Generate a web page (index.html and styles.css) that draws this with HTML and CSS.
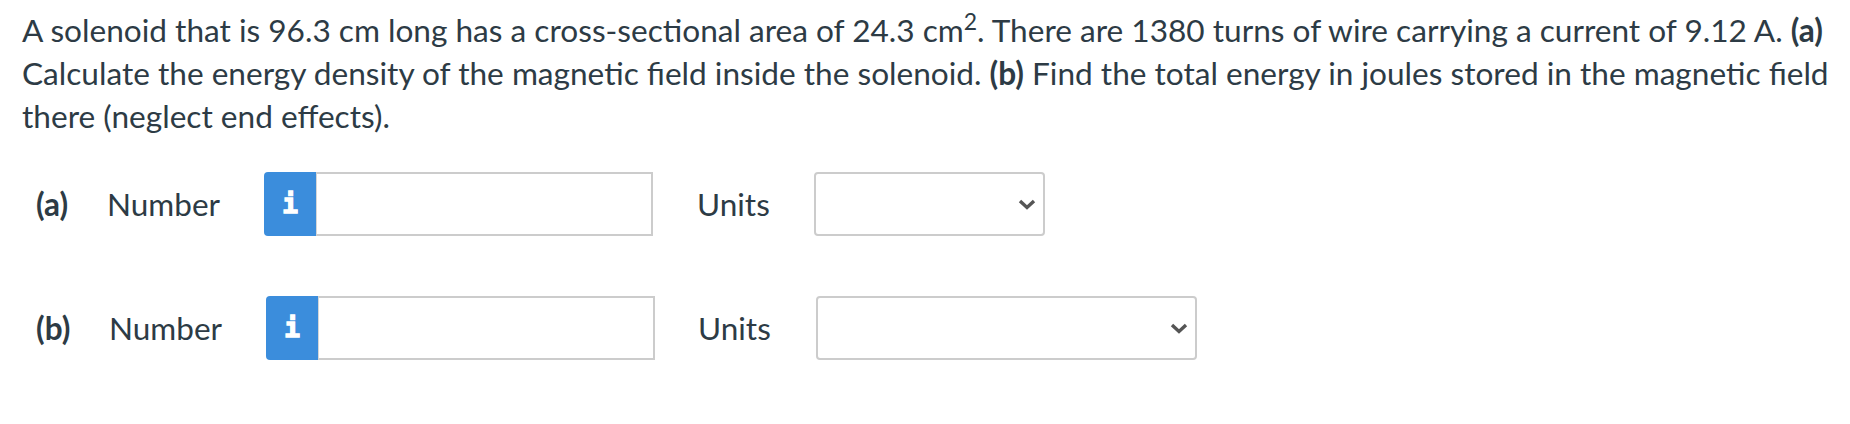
FILE: index.html
```html
<!DOCTYPE html>
<html>
<head>
<meta charset="utf-8">
<link rel="stylesheet" href="styles.css">
</head>
<body>
<p class="question">A solenoid that is 96.3 cm long has a cross-sectional area of 24.3 cm<sup>2</sup>. There are 1380 turns of wire carrying a current of 9.12 A. <b>(a)</b> Calculate the energy density of the magnetic field inside the solenoid. <b>(b)</b> Find the total energy in joules stored in the magnetic field there (neglect end effects).</p>
<div class="answers">
  <div class="row row-a">
    <span class="part">(a)</span>
    <span class="label">Number</span>
    <div class="group">
      <button class="info" type="button">i</button>
      <input class="num" type="text">
    </div>
    <span class="units">Units</span>
    <div class="select">
      <svg class="chev" width="18" height="11" viewBox="0 0 18 11"><path d="M2 2 L9 8.5 L16 2" fill="none" stroke="#555" stroke-width="3.4"/></svg>
    </div>
  </div>
  <div class="row row-b">
    <span class="part">(b)</span>
    <span class="label">Number</span>
    <div class="group">
      <button class="info" type="button">i</button>
      <input class="num" type="text">
    </div>
    <span class="units">Units</span>
    <div class="select">
      <svg class="chev" width="18" height="11" viewBox="0 0 18 11"><path d="M2 2 L9 8.5 L16 2" fill="none" stroke="#555" stroke-width="3.4"/></svg>
    </div>
  </div>
</div>
</body>
</html>
```

FILE: styles.css
```css
html, body {
  margin: 0;
  padding: 0;
  background: #fff;
}
body {
  font-family: Lato, "Open Sans", sans-serif;
  color: #2d3b45;
}
.question {
  margin: 0;
  padding: 9px 20px 0 22px;
  font-size: 31.6px;
  line-height: 43px;
}
.question sup {
  font-size: 23px;
  line-height: 0;
  vertical-align: 0;
  position: relative;
  top: -12px;
}
.question b {
  font-weight: 700;
}
.answers {
  padding-top: 34px;
  display: flex;
  flex-direction: column;
  gap: 60px;
}
.row {
  display: flex;
  align-items: center;
  font-size: 31.5px;
  height: 64px;
}
.part {
  font-weight: 700;
  margin-left: 36px;
  width: 71px;
}
.row-b .part {
  width: 73px;
}
.label {
  width: 157px;
}
.group {
  display: flex;
  height: 64px;
}
.info {
  width: 52px;
  height: 64px;
  border: none;
  margin: 0;
  padding: 0;
  background: #3b8ddc;
  color: #fff;
  border-radius: 4px 0 0 4px;
  font-family: "DejaVu Sans Mono", "Liberation Mono", monospace;
  font-weight: 700;
  font-size: 26px;
  -webkit-text-stroke: 1.4px #fff;
}
.num {
  box-sizing: border-box;
  width: 337px;
  height: 64px;
  margin: 0;
  border: 2px solid #cccccc;
  border-left: 1px solid #d6d6d6;
  background: #fff;
  border-radius: 0;
  outline: none;
}
.units {
  margin-left: 44px;
  width: 117px;
}
.row-b .units {
  margin-left: 43px;
  width: 118px;
}
.select {
  box-sizing: border-box;
  height: 64px;
  width: 231px;
  border: 2px solid #cccccc;
  border-radius: 4px;
  display: flex;
  align-items: center;
  justify-content: flex-end;
  padding-right: 7px;
  background: #fff;
}
.row-b .select {
  width: 381px;
}
.chev {
  display: block;
}
```
